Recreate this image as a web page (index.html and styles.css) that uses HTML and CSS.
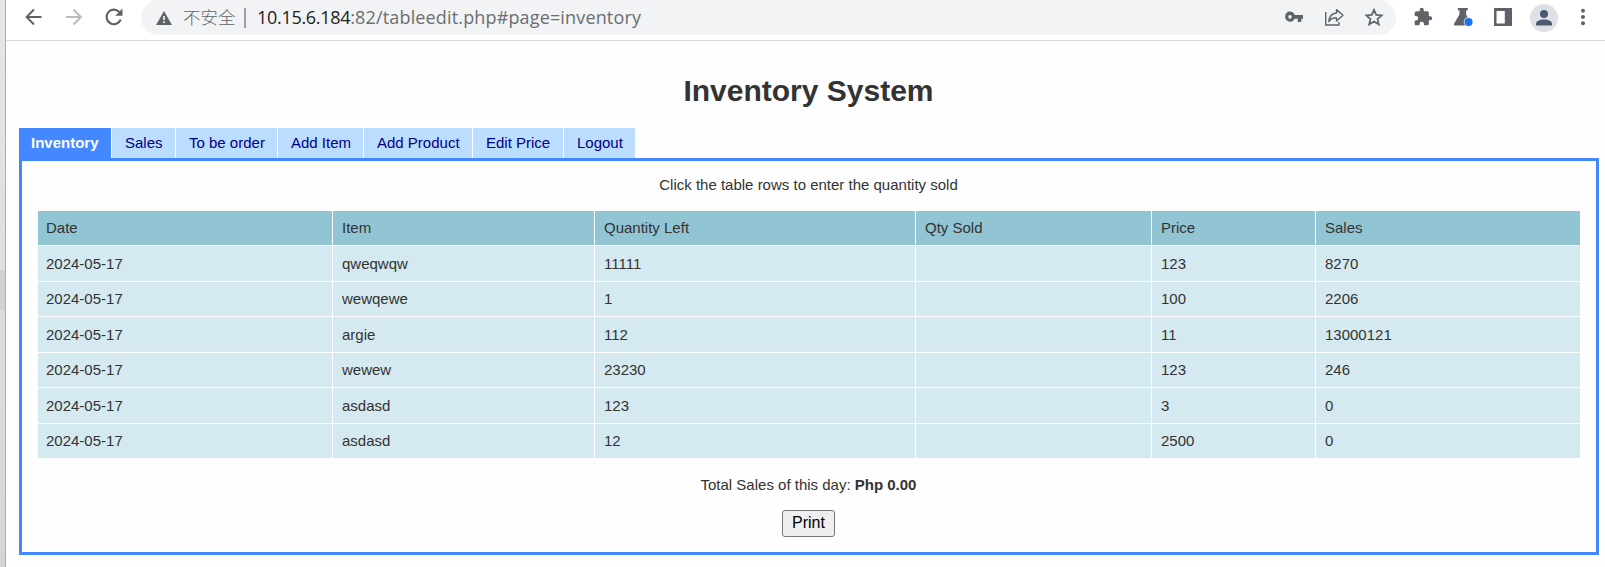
FILE: index.html
```html
<!DOCTYPE html>
<html lang="en">
<head>
<meta charset="utf-8">
<title>Inventory System</title>
<link rel="stylesheet" href="styles.css">
</head>
<body>
<div class="edge"><div class="edge-mark"></div></div>
<div class="window">
  <header class="toolbar">
    <nav class="nav">
      <svg class="icon" width="20" height="20" viewBox="0 0 20 20"><path d="M17.500 10H3M10 2.500L2.600 10l7.400 7.500" fill="none" stroke="#5f6368" stroke-width="2"/></svg>
      <svg class="icon" width="20" height="20" viewBox="0 0 20 20"><path d="M2 10h14.500M9.500 2.500L16.900 10l-7.400 7.500" fill="none" stroke="#babcbe" stroke-width="2"/></svg>
      <svg class="icon" width="20" height="20" viewBox="0 0 20 20"><path d="M16.700 12.500A7.300 7.300 0 1 1 15.300 5" fill="none" stroke="#5f6368" stroke-width="2.100"/><path d="M18.500 1.500v7.200h-7.200z" fill="#5f6368"/></svg>
    </nav>
    <div class="address">
      <svg class="warn" width="16" height="14" viewBox="0 0 16 14"><path d="M8 0l8 14H0z" fill="#5f6368"/><path d="M8 5v4M8 10.300v1.800" stroke="#f1f3f4" stroke-width="1.700"/></svg>
      <span class="insecure">不安全</span>
      <span class="divider"></span>
      <span class="url"><span class="host">10.15.6.184</span><span class="path">:82/tableedit.php#page=inventory</span></span>
      <div class="actions">
        <svg class="icon" width="20" height="20" viewBox="0 0 20 20"><path fill-rule="evenodd" d="M6 4.600a5 5 0 0 1 4.700 3.500H19v3.700h-1.700v3.100h-3.500v-3.100h-3.100A5 5 0 1 1 6 4.600zm0 3.500a1.800 1.800 0 1 0 0 3.600 1.800 1.800 0 0 0 0-3.600z" fill="#5f6368"/></svg>
        <svg class="icon" width="20" height="20" viewBox="0 0 20 20"><path d="M1.700 5v13H15v-3M12.500 2.600l6.500 5.700-6.500 5.700v-3.200c-3.600 0-6 1.200-7.700 3.800C5.300 9.800 7.800 6.300 12.500 6z" fill="none" stroke="#5f6368" stroke-width="1.400" stroke-linejoin="round"/></svg>
        <svg class="icon" width="20" height="20" viewBox="0 0 20 20"><path d="M10 2.800l2.200 5.100 5.500.5-4.200 3.600 1.300 5.400-4.800-2.900-4.800 2.900 1.300-5.400-4.200-3.600 5.500-.5z" fill="none" stroke="#5f6368" stroke-width="1.700"/></svg>
      </div>
    </div>
    <div class="tools">
      <svg class="icon" width="20" height="20" viewBox="0 0 24 24"><path d="M20.500 11H19V7c0-1.100-.9-2-2-2h-4V3.500a2.500 2.500 0 0 0-5 0V5H4c-1.100 0-2 .9-2 2v3.800h1.500a2.700 2.700 0 0 1 0 5.400H2V20c0 1.100.9 2 2 2h3.800v-1.500a2.700 2.700 0 0 1 5.400 0V22H17c1.100 0 2-.9 2-2v-4h1.500a2.500 2.500 0 0 0 0-5z" fill="#5f6368"/></svg>
      <svg class="icon" width="20" height="20" viewBox="0 0 20 20"><path d="M4.800 1h10v2.300h-1.600v4.200l4.500 9.200c.5 1-.1 1.800-1 1.800H2.100c-1 0-1.500-.9-1-1.800l5.300-9.200V3.300H4.800z" fill="#5f6368"/><circle cx="15.500" cy="15" r="4.800" fill="#fff"/><circle cx="15.500" cy="15" r="4.100" fill="#1a73e8"/></svg>
      <svg class="icon" width="20" height="20" viewBox="0 0 20 20"><path fill-rule="evenodd" d="M1 1h18v18H1zM3.500 4v12.500h8.300V4z" fill="#5f6368"/></svg>
      <svg class="icon avatar" width="28" height="28" viewBox="0 0 28 28"><circle cx="14" cy="14" r="14" fill="#dee1e6"/><circle cx="14" cy="10" r="4" fill="#4c5a70"/><path d="M6 21.500v-1.700c0-2.900 5-4.200 8-4.200s8 1.300 8 4.200v1.700z" fill="#4c5a70"/></svg>
      <svg class="icon" width="20" height="20" viewBox="0 0 20 20"><g fill="#5f6368"><circle cx="10" cy="3.800" r="2"/><circle cx="10" cy="10" r="2"/><circle cx="10" cy="16.200" r="2"/></g></svg>
    </div>
  </header>
  <main class="page">
    <h1 class="title">Inventory System</h1>
    <ul class="tabs">
      <li class="tab active">Inventory</li>
      <li class="tab">Sales</li>
      <li class="tab">To be order</li>
      <li class="tab">Add Item</li>
      <li class="tab">Add Product</li>
      <li class="tab">Edit Price</li>
      <li class="tab">Logout</li>
    </ul>
    <section class="panel">
      <p class="hint">Click the table rows to enter the quantity sold</p>
      <div class="grid">
        <div class="cell head">Date</div><div class="cell head">Item</div><div class="cell head">Quantity Left</div><div class="cell head">Qty Sold</div><div class="cell head">Price</div><div class="cell head">Sales</div>
        <div class="cell tall">2024-05-17</div><div class="cell tall">qweqwqw</div><div class="cell tall">11111</div><div class="cell tall"></div><div class="cell tall">123</div><div class="cell tall">8270</div>
        <div class="cell">2024-05-17</div><div class="cell">wewqewe</div><div class="cell">1</div><div class="cell"></div><div class="cell">100</div><div class="cell">2206</div>
        <div class="cell tall">2024-05-17</div><div class="cell tall">argie</div><div class="cell tall">112</div><div class="cell tall"></div><div class="cell tall">11</div><div class="cell tall">13000121</div>
        <div class="cell">2024-05-17</div><div class="cell">wewew</div><div class="cell">23230</div><div class="cell"></div><div class="cell">123</div><div class="cell">246</div>
        <div class="cell tall">2024-05-17</div><div class="cell tall">asdasd</div><div class="cell tall">123</div><div class="cell tall"></div><div class="cell tall">3</div><div class="cell tall">0</div>
        <div class="cell">2024-05-17</div><div class="cell">asdasd</div><div class="cell">12</div><div class="cell"></div><div class="cell">2500</div><div class="cell">0</div>
      </div>
      <p class="total">Total Sales of this day: <b>Php 0.00</b></p>
      <button class="print">Print</button>
    </section>
  </main>
</div>
</body>
</html>
```
FILE: styles.css
```css
* { box-sizing: border-box; }
body {
  margin: 0;
  height: 567px;
  display: flex;
  overflow: hidden;
  background: #fefefe;
  color: #333;
  font: 15px/17px "Liberation Sans", Arial, sans-serif;
}
.edge {
  width: 6px;
  flex: none;
  padding-top: 270px;
  background: linear-gradient(#e6e6e6, #d6d6d6);
  border-right: 1px solid #adadad;
}
.edge-mark { height: 40px; background: #d0d1d4; }
.window { flex: 1; min-width: 0; display: flex; flex-direction: column; }
.toolbar {
  height: 41px;
  flex: none;
  display: flex;
  background: #fff;
  border-bottom: 1px solid #dadce0;
}
.icon { display: block; flex: none; }
.nav { display: flex; gap: 20px; padding: 7px 0 0 18px; width: 135px; }
.address {
  width: 1255px;
  height: 35px;
  flex: none;
  display: flex;
  background: #f1f3f4;
  border-radius: 18px;
}
.warn { flex: none; margin: 11px 0 0 15px; }
.insecure {
  width: 54px;
  margin: 4px 0 0 11px;
  color: #5f6368;
  font: 300 17.500px/26px "Noto Sans CJK SC", sans-serif;
  white-space: nowrap;
}
.divider { width: 2px; height: 20px; margin: 8px 0 0 7px; background: #9a9da1; }
.url {
  margin: 4px 0 0 11px;
  font: 18px/26px "Open Sans", "Noto Sans", sans-serif;
  white-space: nowrap;
}
.host { color: #202124; letter-spacing: -0.300px; }
.path { color: #6b6e72; letter-spacing: 0.150px; }
.actions { display: flex; gap: 20px; margin: 7px 12px 0 auto; }
.tools { display: flex; gap: 20px; padding: 7px 0 0 17px; }
.avatar { margin: -3px -5px 0 -3px; }
.page { flex: 1; padding: 28px 6px 0 13px; display: flex; flex-direction: column; }
.title {
  height: 59px;
  margin: 0 1px 0 0;
  text-align: center;
  font-size: 30px;
  line-height: 44px;
}
.tabs {
  display: grid;
  grid-template-columns: 92px 63px 101px 85px 108px 90px 71px;
  gap: 1px;
  margin: 0;
  padding: 0;
  list-style: none;
}
.tab {
  height: 30px;
  padding-left: 13px;
  background: #bbddff;
  color: #000088;
  line-height: 29px;
  white-space: nowrap;
}
.tab.active { padding-left: 12px; background: #4488ff; color: #fff; font-weight: bold; }
.panel {
  height: 397px;
  padding: 15px 17px 0 16px;
  border: 3px solid #4488ff;
  display: flex;
  flex-direction: column;
  align-items: center;
}
.hint { margin: 0; height: 35px; }
.grid {
  display: grid;
  align-self: stretch;
  margin-right: -1px;
  grid-template-columns: 294px 261px 320px 235px 163px 1fr;
  grid-template-rows: 34px 35px 34px 35px 34px 35px 34px;
  gap: 1px;
}
.cell { padding-left: 9px; background: #d5eaf0; line-height: 33px; }
.cell:nth-child(6n+1) { padding-left: 8px; }
.tall { line-height: 35px; }
.head { background: #91c5d4; }
.total { margin: 18px 0 0; }
.print {
  width: 53px;
  height: 27px;
  margin-top: 17px;
  padding: 0 0 2px;
  background: #efefef;
  border: 1px solid #767676;
  border-radius: 3px;
  color: #000;
  font: 16px "Liberation Sans", Arial, sans-serif;
}
```
